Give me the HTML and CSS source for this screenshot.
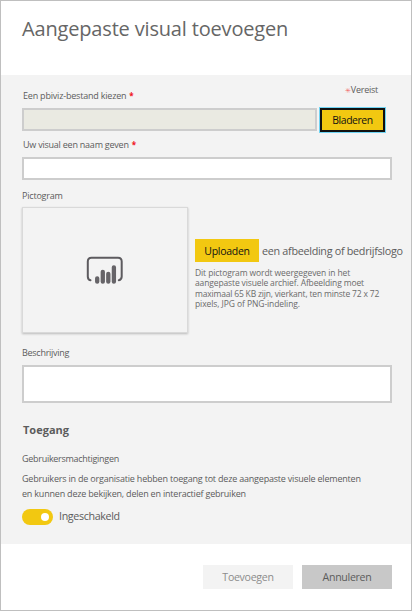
FILE: index.html
```html
<!DOCTYPE html>
<html lang="nl">
<head>
<meta charset="utf-8">
<title>Aangepaste visual toevoegen</title>
<link rel="stylesheet" href="styles.css">
</head>
<body>
<div class="dialog">
  <header class="header"><h1 class="title">Aangepaste visual toevoegen</h1></header>
  <main class="content">
    <div class="label-row">
      <label class="label label-file">Een pbiviz-bestand kiezen<span class="star">*</span></label>
      <span class="required"><span class="required-star">✳</span>Vereist</span>
    </div>
    <div class="file-row">
      <div class="field field-file"></div>
      <button class="browse">Bladeren</button>
    </div>
    <label class="label label-name">Uw visual een naam geven<span class="star">*</span></label>
    <div class="field field-name"></div>
    <div class="label label-icon">Pictogram</div>
    <div class="icon-row">
      <div class="preview">
        <svg class="logo" width="38" height="30" viewBox="0 0 38 30">
          <path d="M4.500 24.300C2.500 23.800 1.800 22.500 1.800 20.500V5.500Q1.800 1.800 5.500 1.800H32Q35.700 1.800 35.700 5.500V20.500C35.700 22.500 34.800 23.800 32.800 24.300" fill="none" stroke="#5d5b5f" stroke-width="2" stroke-linecap="round"/>
          <path d="M11.200 22.300V25.700M16.800 15.800V25.700M22.300 17.800V25.700M27.900 11.300V25.700" stroke="#666468" stroke-width="4.300" stroke-linecap="round"/>
        </svg>
      </div>
      <div class="upload-column">
        <div class="upload-row">
          <button class="upload">Uploaden</button>
          <span class="upload-text">een afbeelding of bedrijfslogo</span>
        </div>
        <p class="hint"><span class="hint-1">Dit pictogram wordt weergegeven in het</span><br><span class="hint-2">aangepaste visuele archief. Afbeelding moet</span><br><span class="hint-3">maximaal 65 KB zijn, vierkant, ten minste 72 x 72</span><br><span class="hint-4">pixels, JPG of PNG-indeling.</span></p>
      </div>
    </div>
    <div class="label label-description">Beschrijving</div>
    <div class="field field-description"></div>
    <h2 class="access">Toegang</h2>
    <div class="label label-permissions">Gebruikersmachtigingen</div>
    <p class="note">Gebruikers in de organisatie hebben toegang tot deze aangepaste visuele elementen<br>en kunnen deze bekijken, delen en interactief gebruiken</p>
    <div class="toggle-row">
      <span class="toggle"><span class="knob"></span></span>
      <span class="toggle-text">Ingeschakeld</span>
    </div>
  </main>
  <footer class="footer">
    <button class="action add">Toevoegen</button>
    <button class="action cancel">Annuleren</button>
  </footer>
</div>
</body>
</html>
```
FILE: styles.css
```css
* { box-sizing: border-box; }
body { margin: 0; background: #fff; font-family: "Open Sans", "Noto Sans", sans-serif; color: #5c5c5c; }
h1, h2, p { margin: 0; font-weight: 400; }
button { border: 0; padding: 0; font: inherit; white-space: nowrap; }
.dialog { width: 412px; height: 611px; border: 1px solid #bfbfbf; white-space: nowrap; }
.header { height: 74px; padding: 12px 0 0 21px; }
.title { font-size: 20px; line-height: 32px; letter-spacing: -0.17px; color: #666; }
.content { height: 469px; padding: 8px 19px 0 21px; background: #f3f3f3; }
.label { display: block; font-size: 9px; line-height: 14px; letter-spacing: -0.2px; }
.star { color: #f01020; font-size: 8px; font-weight: 700; margin-left: 3px; }
.label-row { display: flex; justify-content: space-between; height: 25px; }
.label-file { padding: 6px 0 0 1px; }
.required { font-size: 9px; line-height: 14px; letter-spacing: -0.25px; margin-right: 14px; }
.required-star { color: #f16a6a; font-size: 7px; }
.file-row { display: flex; gap: 3px; height: 24px; }
.field { border: 2px solid #cdcdcd; background: #fff; }
.field-file { width: 295px; height: 23px; background: #eaeae2; }
.browse { width: 65px; height: 24px; border: 2px solid #111; background: #f2c811; box-shadow: 0 0 0 1px #70d4f3; color: #111; font-size: 10.400px; letter-spacing: -0.4px; line-height: 20px; }
.label-name { margin-top: 6px; padding-left: 1px; letter-spacing: -0.23px; }
.field-name { height: 23px; margin-top: 5px; }
.label-icon { margin-top: 9px; }
.icon-row { display: flex; gap: 7px; height: 126px; margin-top: 4px; }
.preview { display: flex; flex: none; width: 166px; height: 126px; border: 1px solid #d9d9d9; box-shadow: 0 1px 2px #bbb; padding: 48px 0 0 63px; }
.logo { display: block; }
.upload-column { padding-top: 32px; }
.upload-row { display: flex; gap: 3px; }
.upload { flex: none; width: 64px; height: 23px; background: #f2c811; color: #111; font-size: 10.500px; letter-spacing: -0.27px; line-height: 22px; }
.upload-text { font-size: 10.800px; line-height: 24px; letter-spacing: -0.3px; }
.hint { margin-top: 5px; font-size: 8.500px; line-height: 10.400px; color: #6b6b6b; }
.hint-1 { letter-spacing: -0.1px; }
.hint-2 { letter-spacing: -0.13px; }
.hint-3 { letter-spacing: -0.18px; }
.hint-4 { letter-spacing: -0.08px; }
.label-description { margin-top: 13px; letter-spacing: -0.27px; }
.field-description { height: 38px; margin-top: 5px; }
.access { margin-top: 19px; padding-left: 1px; font-size: 11px; line-height: 16px; font-weight: 700; }
.label-permissions { margin-top: 14px; letter-spacing: -0.28px; }
.note { margin-top: 6px; font-size: 9px; line-height: 14.500px; letter-spacing: -0.2px; }
.toggle-row { display: flex; gap: 6px; margin-top: 8px; }
.toggle { display: flex; justify-content: flex-end; align-items: center; width: 31px; height: 16px; border-radius: 8px; background: #f2c811; padding-right: 4px; }
.knob { width: 8px; height: 8px; border-radius: 50%; background: #fff; }
.toggle-text { font-size: 10.700px; line-height: 15px; letter-spacing: -0.35px; }
.footer { display: flex; gap: 9px; justify-content: flex-end; padding: 21px 19px 0 0; }
.action { width: 90px; height: 24px; font-size: 10.600px; letter-spacing: -0.3px; line-height: 24px; }
.add { background: #f3f3f3; color: #8c8c8c; }
.cancel { background: #c8c8c8; color: #5c5c5c; }
```
